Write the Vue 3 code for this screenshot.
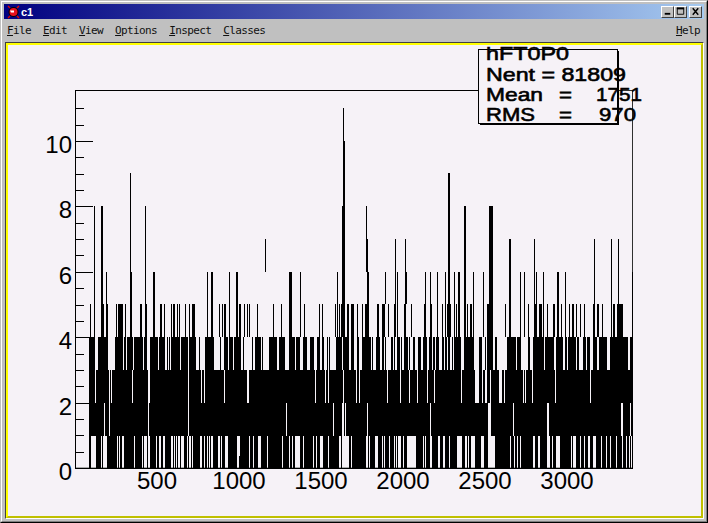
<script setup>
const menus = ['File', 'Edit', 'View', 'Options', 'Inspect', 'Classes']

const X0 = 89
const X1 = 633

// Each band: y range plus the columns that are black (or white, when gaps is true).
const bands = [
  { top: 109, bottom: 142, runs: '343' },
  { top: 142, bottom: 174, runs: '343-345' },
  { top: 174, bottom: 207, runs: '130 343-345 448-450' },
  { top: 207, bottom: 240, runs: '94 101-103 130 145 342-345 366 448-450 464-466 489-493' },
  { top: 240, bottom: 273, runs: '94 101-103 130 145 265 342-345 366-368 395 405 448-450 464-466 489-493 509-511 534 594 611 618' },
  { top: 273, bottom: 305, runs: '94 101-103 106 130-132 145 153-155 207 211-213 229 236-238 289-292 300 337 342-345 367-369 385 395 397 405 406 425 430 437 445 448-450 454 458-460 464-466 473 483 489-493 509-511 520 524 534 536 543 557-559 565 594 611 618 632' },
  { top: 305, bottom: 338, runs: '90 94 101-104 106-108 116 118-123 125 130-132 140-142 145-147 153-155 160-162 164 171 173-175 177 179 185 189 192-195 207 211-213 219 222 224-226 229 236-238 239-241 244 247 249 257 273 281 289-292 300 304 319 322 335 337 339 341-345 347-349 351-354 357 362 365-369 377-379 382-385 388 394-396 397 404-406 411 424-426 430-432 437 442 445 447-451 454 456 458-460 464-466 467 470-472 473 483 487-493 505 509-511 520 524 528 534-537 539-542 543 547 553-555 557-559 561 565 569 572-574 576 580 584 593-595 597-599 602 611 613-615 617-623 632' },
  { top: 338, bottom: 371, runs: '89-95 98-108 115-123 124-126 127-133 134-143 144-147 150-158 159-165 167 169 171-180 181-188 189-196 199 205-214 220 224-228 229-233 234-241 243 252 255-261 262 269-277 279-285 289-295 296-300 303-307 310-314 317-320 322-324 327 329 336-342 343-349 351-354 357-359 362-371 372 376-380 382-384 385 391-393 394 397-400 401 404-408 409 413-415 418-421 423-427 429-432 433-435 436-439 442-444 445-447 448-450 452 454-461 464-474 479-482 485 487-493 495-497 507-516 517-521 528-530 533-544 545-554 556-563 565-567 568-576 577-579 583-586 587-590 593-597 599-607 610-628 630-633' },
  { top: 371, bottom: 404, gaps: true, runs: '95 109 111 132 148-150 188 201 204 224 247-249 315 325 328 343 356 359 387 400 409 417 427 434 461 475-479 482 485-487 490 499-502 504 523 525 532 555 590' },
  { top: 404, bottom: 437, gaps: true, runs: '104 109 148 188 286 333 342-344 345 367 430 488-491 513 547-549 621-623 630' },
  { top: 437, bottom: 469, gaps: true, runs: '91-96 101 103-107 117 119 122-124 134 142 144-147 148-150 156 159-161 163-165 171-173 174 176 178-180 181-184 187 189-191 192 200-202 204 207 209 211-213 218-220 221 225-228 237-240 249 253 258-261 267 282 289 292 295-300 303 313 316 320-323 328 339-341 342-349 351 366-368 369 375-378 382 384-385 389 394 396 398-401 403 407-416 423 425 430-432 438-440 443-445 449 457-462 465-467 468 471-475 481-484 488-495 510 514 517 520 533-535 538-540 547-550 552 556-560 571 573-576 580 584 588-590 593-596 601 606 610 616 622 626 629 631' },
  { top: 457, bottom: 469, runs: '239' },
]

function parse(text) {
  return text.split(' ').map((part) => {
    const [a, b] = part.split('-').map(Number)
    return [a, b === undefined ? a + 1 : b]
  })
}

function invert(runs) {
  const out = []
  let at = X0
  for (const [a, b] of runs) {
    if (a > at) out.push([at, a])
    at = Math.max(at, b)
  }
  if (at < X1) out.push([at, X1])
  return out
}

const barPath = bands
  .map((band) => {
    const parsed = parse(band.runs)
    const runs = band.gaps ? invert(parsed) : parsed
    return runs
      .map(([a, b]) => `M${a} ${band.top}H${b}V${band.bottom}H${a}Z`)
      .join('')
  })
  .join('')

const ticks = Array.from({ length: 23 }, (_, k) => {
  const y = Math.round(469 - 16.35 * k)
  const major = k % 4 === 0
  return { y: y + 0.5, x2: major ? 93 : 84 }
})

const yLabels = [
  { text: '10', y: 154 },
  { text: '8', y: 219 },
  { text: '6', y: 285 },
  { text: '4', y: 350 },
  { text: '2', y: 416 },
  { text: '0', y: 481 },
]
const xLabels = [
  { text: '500', x: 157 },
  { text: '1000', x: 239 },
  { text: '1500', x: 321 },
  { text: '2000', x: 403 },
  { text: '2500', x: 485 },
  { text: '3000', x: 567 },
]
</script>

<template>
  <div class="window">
    <div class="window-inner">
      <header class="titlebar">
        <svg class="app-icon" width="13" height="14" viewBox="0 0 13 14">
          <path d="M1 1l2 2M12 1l-2 2M1 13l2-2M12 13l-2-2" stroke="#e00000" stroke-width="1.4" fill="none" />
          <circle cx="6.5" cy="7" r="5" fill="#000" />
          <circle cx="6.5" cy="7" r="4" fill="#e8101c" />
          <path d="M3 5.5h4v2H4z" fill="#fff" />
        </svg>
        <span class="title">c1</span>
        <div class="controls">
          <button class="ctl ctl-min" type="button">
            <svg width="12" height="11" viewBox="0 0 12 11"><rect x="3" y="7" width="6" height="2" fill="#000" /></svg>
          </button>
          <button class="ctl" type="button">
            <svg width="12" height="11" viewBox="0 0 12 11"><path d="M2.5 2.5h7v6h-7z M2.5 1.5v1" fill="none" stroke="#000" /><rect x="2" y="1" width="8" height="2" fill="#000" /></svg>
          </button>
          <button class="ctl ctl-close" type="button">
            <svg width="12" height="11" viewBox="0 0 12 11"><path d="M3 2l6 7M9 2l-6 7" stroke="#000" stroke-width="1.6" fill="none" /></svg>
          </button>
        </div>
      </header>

      <nav class="menubar">
        <span v-for="m in menus" :key="m" class="menu"><u>{{ m[0] }}</u>{{ m.slice(1) }}</span>
        <span class="menu help"><u>H</u>elp</span>
      </nav>

      <main class="sunken">
        <div class="pad">
          <svg class="plot" width="692" height="469" viewBox="8 46 692 469">
            <path d="M75 91.5H632.5V469" class="frame-gray" />
            <rect x="76" y="468" width="556" height="1" class="baseline" />
            <path :d="barPath" class="bars" />
            <path d="M75.5 91V469.5H633" class="axis" />
            <path d="M75 91.5H478" class="axis" />
            <line v-for="t in ticks" :key="t.y" x1="75" :x2="t.x2" :y1="t.y" :y2="t.y" class="axis" />

            <text v-for="l in yLabels" :key="l.text" x="72" :y="l.y" class="num end">{{ l.text }}</text>
            <text v-for="l in xLabels" :key="l.text" :x="l.x" y="490" class="num mid">{{ l.text }}</text>

            <rect x="480" y="52" width="139" height="74" class="shadow" />
            <rect x="478.5" y="50.5" width="139" height="74" class="box" />

            <text x="486" y="61" textLength="83" lengthAdjust="spacingAndGlyphs" class="stat">hFT0P0</text>
            <text x="486" y="82" textLength="140" lengthAdjust="spacingAndGlyphs" class="stat">Nent = 81809</text>
            <text x="486" y="102" textLength="57" lengthAdjust="spacingAndGlyphs" class="stat">Mean</text>
            <text x="559" y="102" textLength="13" lengthAdjust="spacingAndGlyphs" class="stat">=</text>
            <text x="596" y="102" textLength="46" lengthAdjust="spacingAndGlyphs" class="stat">1751</text>
            <text x="486" y="122" textLength="49" lengthAdjust="spacingAndGlyphs" class="stat">RMS</text>
            <text x="559" y="122" textLength="13" lengthAdjust="spacingAndGlyphs" class="stat">=</text>
            <text x="599" y="122" textLength="37" lengthAdjust="spacingAndGlyphs" class="stat">970</text>
          </svg>
        </div>
      </main>
    </div>
  </div>
</template>

<style>
html,
body {
  margin: 0;
  background: #c0c0c0;
}
</style>

<style scoped>
.window {
  width: 708px;
  height: 523px;
  box-sizing: border-box;
  border: 1px solid;
  border-color: #c0c0c0 #000 #000 #c0c0c0;
  overflow: hidden;
}
.window-inner {
  height: 100%;
  box-sizing: border-box;
  border: 1px solid;
  border-color: #fff #808080 #808080 #fff;
  background: #c0c0c0;
  padding: 2px;
  display: flex;
  flex-direction: column;
}
.titlebar {
  height: 15px;
  flex: none;
  display: flex;
  align-items: center;
  padding-left: 3px;
  background: linear-gradient(90deg, #000080, #a6caf0);
}
.app-icon {
  flex: none;
}
.title {
  margin-left: 1px;
  color: #fff;
  font: bold 11px "Liberation Sans", sans-serif;
}
.controls {
  margin-left: auto;
  margin-right: 2px;
  display: flex;
}
.ctl {
  width: 13px;
  height: 12px;
  padding: 0;
  box-sizing: border-box;
  border: 1px solid;
  border-color: #fff #404040 #404040 #fff;
  background: #c0c0c0;
  display: flex;
  align-items: center;
  justify-content: center;
}
.ctl-close {
  margin-left: 2px;
}
.menubar {
  height: 23px;
  flex: none;
  display: flex;
  align-items: center;
  gap: 12px;
  padding-left: 3px;
  padding-right: 4px;
  font: 11px "DejaVu Sans Mono", monospace;
  letter-spacing: -0.62px;
  color: #111;
}
.help {
  margin-left: auto;
}
.sunken {
  flex: 1;
  min-height: 0;
  border: 1px solid;
  border-color: #404040 #fff #fff #404040;
  margin-left: 1px;
  margin-right: 0;
  outline: 0;
}
.pad {
  height: 100%;
  box-sizing: border-box;
  border: 2px solid;
  border-color: #ffff00 #c0c000 #c0c000 #ffff00;
  background: #f6f2f7;
}
.plot {
  display: block;
}
.bars {
  fill: #000;
  shape-rendering: crispEdges;
}
.baseline {
  fill: #a8a8a8;
}
.axis {
  stroke: #000;
  stroke-width: 1;
  fill: none;
  shape-rendering: crispEdges;
}
.frame-gray {
  stroke: #303030;
  stroke-width: 1;
  fill: none;
  shape-rendering: crispEdges;
}
.num {
  font-family: "Liberation Sans", sans-serif;
  font-size: 24px;
  fill: #000;
}
.end {
  text-anchor: end;
}
.mid {
  text-anchor: middle;
}
.shadow {
  fill: #000;
}
.box {
  fill: #f6f2f7;
  stroke: #000;
  stroke-width: 1;
  shape-rendering: crispEdges;
}
.stat {
  font-family: "Liberation Sans", sans-serif;
  font-size: 19px;
  fill: #000;
  stroke: #000;
  stroke-width: 0.6;
}
</style>
